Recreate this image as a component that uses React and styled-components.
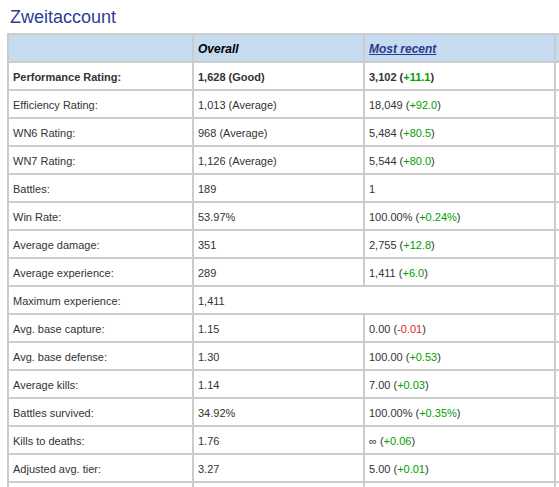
import React from "react";
import styled, { createGlobalStyle } from "styled-components";

const GlobalStyle = createGlobalStyle`
html, body {
    margin: 0;
    padding: 0;
    background: #fff;
    overflow: hidden;
}
body {
    font-family: "Liberation Sans", Arial, sans-serif;
}
`;

const stats = [
    { label: "Performance Rating:", overall: "1,628 (Good)", recent: "3,102", delta: "+11.1", strong: true },
    { label: "Efficiency Rating:", overall: "1,013 (Average)", recent: "18,049", delta: "+92.0" },
    { label: "WN6 Rating:", overall: "968 (Average)", recent: "5,484", delta: "+80.5" },
    { label: "WN7 Rating:", overall: "1,126 (Average)", recent: "5,544", delta: "+80.0" },
    { label: "Battles:", overall: "189", recent: "1" },
    { label: "Win Rate:", overall: "53.97%", recent: "100.00%", delta: "+0.24%" },
    { label: "Average damage:", overall: "351", recent: "2,755", delta: "+12.8" },
    { label: "Average experience:", overall: "289", recent: "1,411", delta: "+6.0" },
    { label: "Maximum experience:", overall: "1,411", span: true },
    { label: "Avg. base capture:", overall: "1.15", recent: "0.00", delta: "-0.01" },
    { label: "Avg. base defense:", overall: "1.30", recent: "100.00", delta: "+0.53" },
    { label: "Average kills:", overall: "1.14", recent: "7.00", delta: "+0.03" },
    { label: "Battles survived:", overall: "34.92%", recent: "100.00%", delta: "+0.35%" },
    { label: "Kills to deaths:", overall: "1.76", recent: "\u221e", delta: "+0.06" },
    { label: "Adjusted avg. tier:", overall: "3.27", recent: "5.00", delta: "+0.01" },
    { label: "", overall: "", recent: "" },
];

export default function App() {
    return (
        <>
            <GlobalStyle />
            <Page>
                <Title>Zweitaccount</Title>
                <StatsTable>
                    <colgroup>
                        <col style={{ width: 185 }} />
                        <col style={{ width: 171 }} />
                        <col style={{ width: 191 }} />
                        <col style={{ width: 200 }} />
                    </colgroup>
                    <thead>
                        <tr>
                            <HeadCell></HeadCell>
                            <HeadCell>Overall</HeadCell>
                            <HeadCell><HeadLink href="#">Most recent</HeadLink></HeadCell>
                            <HeadCell></HeadCell>
                        </tr>
                    </thead>
                    <tbody>
                        {stats.map((s, i) => (
                            <tr key={i}>
                                <Cell $strong={s.strong}>{s.label}</Cell>
                                {s.span ? (
                                    <Cell colSpan={2}>{s.overall}</Cell>
                                ) : (
                                    <>
                                        <Cell $strong={s.strong}>{s.overall}</Cell>
                                        <Cell $strong={s.strong}>
                                            {s.recent}
                                            {s.delta && (
                                                <> (<Delta $down={s.delta.startsWith("-")}>{s.delta}</Delta>)</>
                                            )}
                                        </Cell>
                                    </>
                                )}
                                <Cell></Cell>
                            </tr>
                        ))}
                    </tbody>
                </StatsTable>
            </Page>
        </>
    );
}

// styling of components
const Page = styled.div`
width: 100%;
overflow: hidden;
`;

const Title = styled.h2`
margin: 0;
padding: 6px 0 0 10px;
height: 27px;
box-sizing: border-box;
font-size: 18px;
line-height: 22px;
font-weight: normal;
color: #2d3c96;
`;

const StatsTable = styled.table`
margin: 6px 0 0 7px;
width: 749px;
table-layout: fixed;
border-collapse: separate;
border-spacing: 0;
border-top: 2px solid #cccccc;
border-left: 2px solid #cccccc;
`;

const HeadCell = styled.th`
box-sizing: border-box;
height: 28px;
padding: 1px 4px 0;
background-color: #c5dbf0;
border-right: 2px solid #cccccc;
border-bottom: 2px solid #cccccc;
text-align: left;
vertical-align: middle;
font-size: 12px;
font-weight: bold;
font-style: italic;
color: #000;
white-space: nowrap;
`;

const HeadLink = styled.a`
color: #2b3990;
text-decoration: underline;
`;

const Cell = styled.td`
box-sizing: border-box;
height: 28px;
padding: 1px 4px 0;
border-right: 2px solid #cccccc;
border-bottom: 2px solid #cccccc;
vertical-align: middle;
font-size: 11px;
font-weight: ${(p) => (p.$strong ? "bold" : "normal")};
color: #333333;
white-space: nowrap;
`;

const Delta = styled.span`
color: ${(p) => (p.$down ? "#e0201f" : "#00a000")};
`;
